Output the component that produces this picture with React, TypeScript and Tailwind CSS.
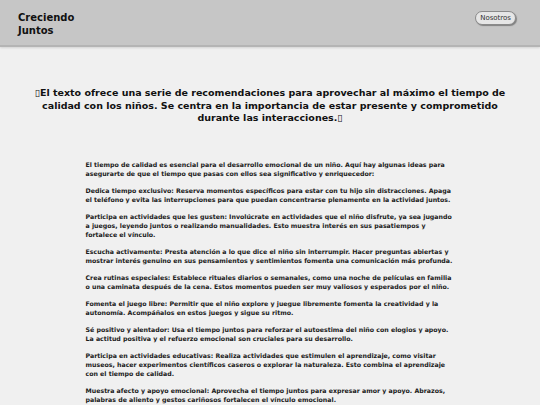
const paragraphs = [
  'El tiempo de calidad es esencial para el desarrollo emocional de un niño. Aquí hay algunas ideas para asegurarte de que el tiempo que pasas con ellos sea significativo y enriquecedor:',
  'Dedica tiempo exclusivo: Reserva momentos específicos para estar con tu hijo sin distracciones. Apaga el teléfono y evita las interrupciones para que puedan concentrarse plenamente en la actividad juntos.',
  'Participa en actividades que les gusten: Involúcrate en actividades que el niño disfrute, ya sea jugando a juegos, leyendo juntos o realizando manualidades. Esto muestra interés en sus pasatiempos y fortalece el vínculo.',
  'Escucha activamente: Presta atención a lo que dice el niño sin interrumpir. Hacer preguntas abiertas y mostrar interés genuino en sus pensamientos y sentimientos fomenta una comunicación más profunda.',
  'Crea rutinas especiales: Establece rituales diarios o semanales, como una noche de películas en familia o una caminata después de la cena. Estos momentos pueden ser muy valiosos y esperados por el niño.',
  'Fomenta el juego libre: Permitir que el niño explore y juegue libremente fomenta la creatividad y la autonomía. Acompáñalos en estos juegos y sigue su ritmo.',
  'Sé positivo y alentador: Usa el tiempo juntos para reforzar el autoestima del niño con elogios y apoyo. La actitud positiva y el refuerzo emocional son cruciales para su desarrollo.',
  'Participa en actividades educativas: Realiza actividades que estimulen el aprendizaje, como visitar museos, hacer experimentos científicos caseros o explorar la naturaleza. Esto combina el aprendizaje con el tiempo de calidad.',
  'Muestra afecto y apoyo emocional: Aprovecha el tiempo juntos para expresar amor y apoyo. Abrazos, palabras de aliento y gestos cariñosos fortalecen el vínculo emocional.',
  'Fomenta la independencia: Permite que el niño tome decisiones y asuma responsabilidades adecuadas a su edad, reforzando su confianza en sí mismo.',
];

export default function App() {
  return (
    <div className="min-h-screen bg-[#f0f0f0] font-['DejaVu_Sans',sans-serif] text-[#111]">
      <header className="flex h-[47px] items-start justify-between border-b-2 border-[#b4b4b4] bg-[#c6c6c6] px-[18px] pt-[11px] shadow-[0_1px_2px_rgba(0,0,0,0.12)]">
        <div className="text-[10px] font-bold leading-[13px]">
          Creciendo
          <br />
          Juntos
        </div>
        <button className="mr-[6px] rounded-full border border-[#8a8a8a] bg-[#e6e6e6] px-[4px] py-[1px] text-[7px] leading-[10px] text-[#333] shadow-[1px_1px_1px_rgba(0,0,0,0.35)]">
          Nosotros
        </button>
      </header>

      <main className="pt-[40px]">
        <h1 className="mx-auto w-[480px] text-center text-[9.5px] font-bold leading-[12.5px]">
          ▯El texto ofrece una serie de recomendaciones para aprovechar al máximo el tiempo de calidad con los niños. Se centra en la importancia de estar presente y comprometido durante las interacciones.▯
        </h1>

        <div className="mx-auto mt-[35px] flex w-[369px] flex-col gap-[8px] text-[6.25px] font-bold leading-[9px] text-[#1a1a1a]">
          {paragraphs.map((p, i) => (
            <p key={i}>{p}</p>
          ))}
        </div>
      </main>
    </div>
  );
}
